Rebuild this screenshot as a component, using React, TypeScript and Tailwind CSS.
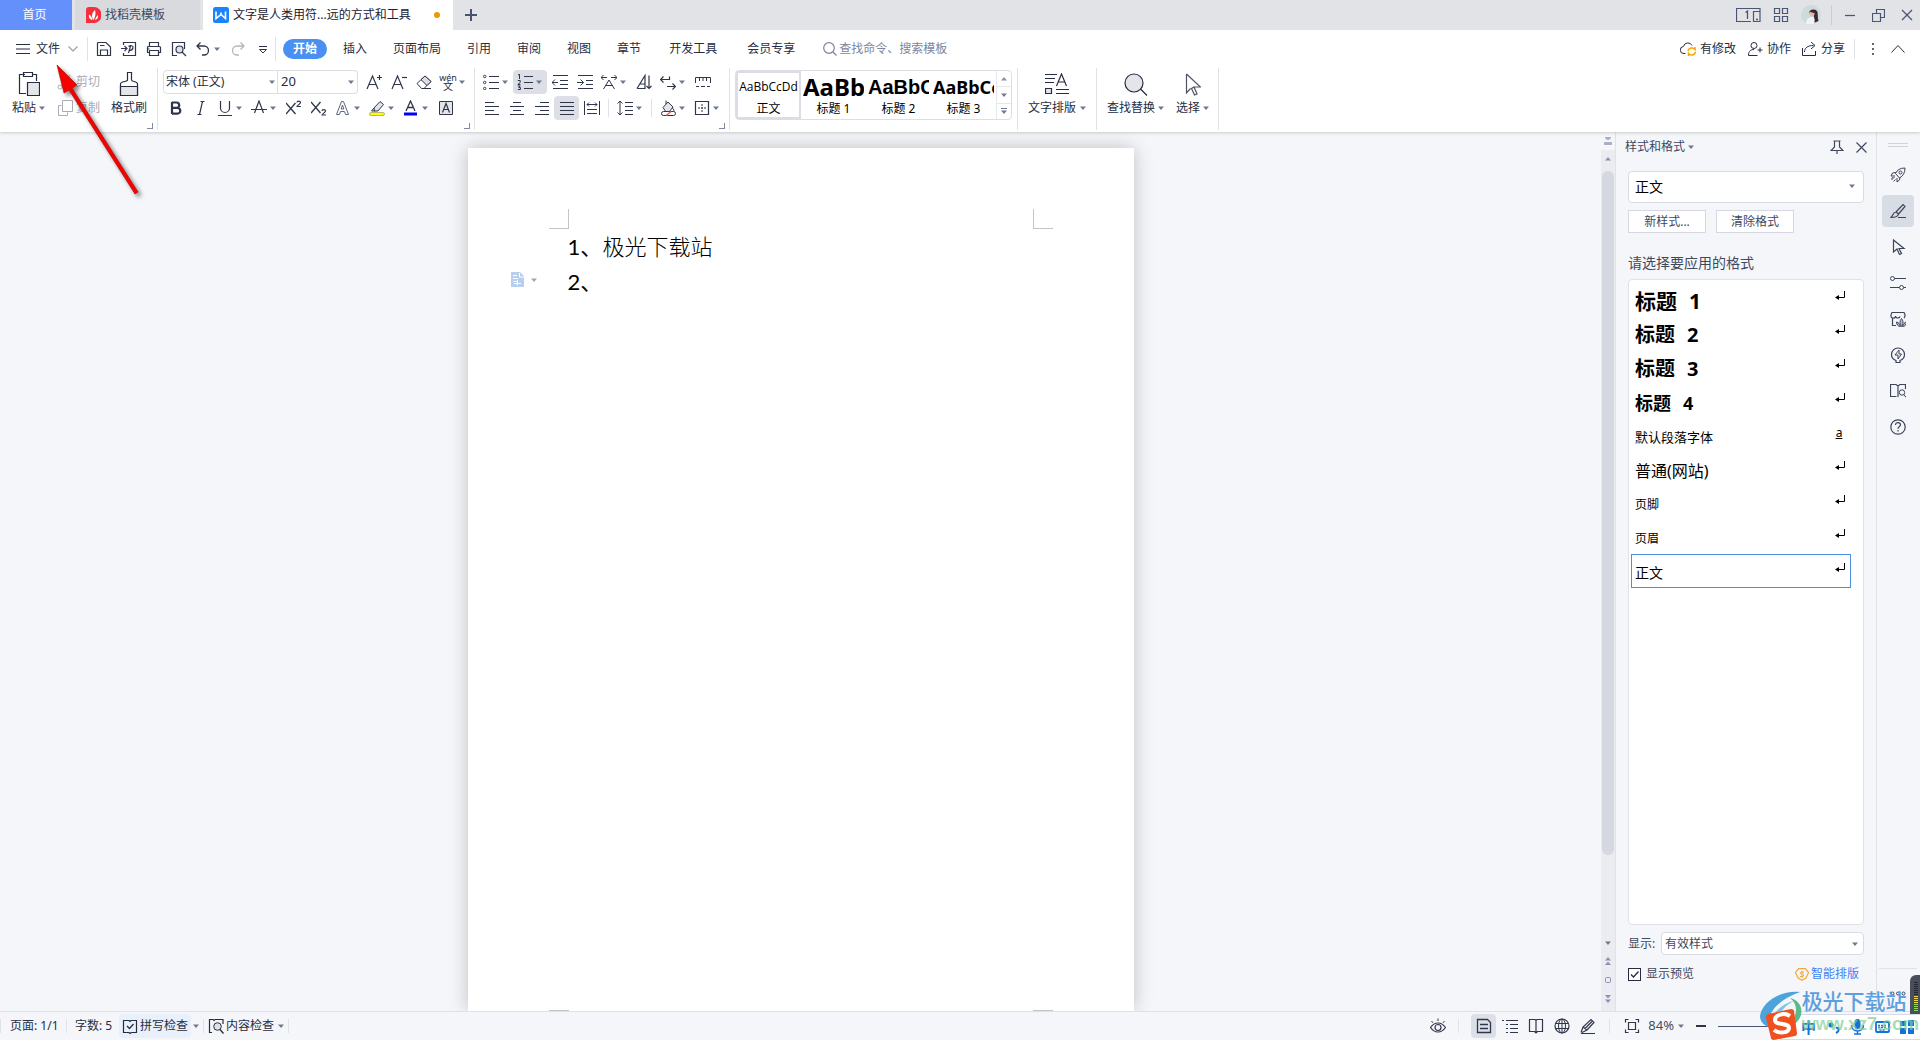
import type { ReactNode } from "react";
import clsx from "clsx";

const Svg = ({
  w = 16,
  h = 16,
  className,
  children,
}: {
  w?: number;
  h?: number;
  className?: string;
  children: ReactNode;
}) => (
  <svg
    width={w}
    height={h}
    viewBox={`0 0 ${w} ${h}`}
    fill="none"
    stroke="currentColor"
    className={clsx("shrink-0", className)}
    aria-hidden="true"
  >
    {children}
  </svg>
);

const Caret = ({ className }: { className?: string }) => (
  <Svg w={6} h={4} className={clsx("text-[#6f7891]", className)}>
    <path d="M0 .5h6L3 4z" fill="currentColor" stroke="none" />
  </Svg>
);

const CaretUp = () => (
  <Svg w={6} h={4} className="text-[#8a93ad]">
    <path d="M0 3.5h6L3 0z" fill="currentColor" stroke="none" />
  </Svg>
);

const Divider = ({ className }: { className?: string }) => (
  <span className={clsx("w-px shrink-0 bg-[#e0e2e7]", className)} />
);

/* 16px 工具图标 */
const icons: Record<string, ReactNode> = {
  save: (
    <>
      <path d="M1.5 14.5v-12a1 1 0 0 1 1-1h7.500l4.500 4.500v8.500z" strokeWidth="1.200" />
      <path d="M4.500 14.500v-5.500h7v5.500M4 4.500h4.500" strokeWidth="1.200" />
    </>
  ),
  export: (
    <>
      <path d="M2.500 4V1.500h12v13h-12V12" strokeWidth="1.200" />
      <path d="M0 7.500h5.500M3.500 5l2.500 2.500L3.500 10M7.500 12l2-7M7.500 5.500c2-1.500 5-1 4.500 1.500-.5 2-3 2.500-4 2.500" strokeWidth="1.200" />
    </>
  ),
  print: (
    <>
      <path d="M3.500 5.500v-4h9v4M3.500 11.500h-2v-5a1 1 0 0 1 1-1h11a1 1 0 0 1 1 1v5h-2M1.500 8h2" strokeWidth="1.200" />
      <path d="M3.500 9.500h9v5h-9z" strokeWidth="1.200" />
    </>
  ),
  preview: (
    <>
      <path d="M6 14.500H1.500v-13h12V8" strokeWidth="1.200" />
      <circle cx="8.500" cy="8.500" r="3.500" fill="#dfe1e6" strokeWidth="1.200" />
      <path d="m11 11 4 4" strokeWidth="1.300" />
    </>
  ),
  undo: <path d="M5.500 1.500 2 5l3.500 3.500M2 5h7a4.500 4.500 0 0 1 0 9H7" strokeWidth="1.300" />,
  redo: <path d="M10.500 1.500 14 5l-3.500 3.500M14 5H7a4.500 4.500 0 0 0 0 9h2" strokeWidth="1.300" />,
  overflow: (
    <>
      <path d="M4 5.500h8" />
      <path d="M4.500 8.500h7L8 12z" />
    </>
  ),
  cut: (
    <>
      <circle cx="3" cy="13" r="2" />
      <circle cx="13" cy="13" r="2" />
      <path d="M3 1l8.500 10.500M13 1 4.500 11.500" />
    </>
  ),
  copy: (
    <>
      <path d="M4.500 5.500h-3v10h9v-3" />
      <path d="M5.500.500h10v11h-10z" />
    </>
  ),
  fontUp: (
    <>
      <path d="M1 15 6.500 2 12 15M3 10.500h7" strokeWidth="1.200" />
      <path d="M11 3.500h5M13.500 1v5" strokeWidth="1.200" />
    </>
  ),
  fontDown: (
    <>
      <path d="M1 15 6.500 2 12 15M3 10.500h7" strokeWidth="1.200" />
      <path d="M11 3.500h5" strokeWidth="1.200" />
    </>
  ),
  eraser: (
    <>
      <path d="M1 9.500 9 2l6 5.500-7 7H5.500z" />
      <path d="m5 5.700 6 5.800L15 7.500 9 2z" fill="#dcdee4" />
      <path d="M7 14.500h8" />
    </>
  ),
  bold: <path d="M4 2v12M4 2.500h4.500a2.700 2.700 0 0 1 0 5.400H4M4 8h5.500a2.800 2.800 0 0 1 0 5.600H4" strokeWidth="2.200" />,
  italic: <path d="M7.500 1.500h4M4.500 14.500h4M9.500 1.500l-3 13" strokeWidth="1.200" />,
  underline: <path d="M3.500 1v7a4.500 4.500 0 0 0 9 0V1M1 15.500h14" strokeWidth="1.200" />,
  strike: <path d="M3.500 13 8 1l4.500 12M0 9.500h16" strokeWidth="1.200" />,
  sup: (
    <>
      <path d="M0 3l9.500 11M9.500 3 0 14" strokeWidth="1.300" />
      <path d="M11 2.500C11 .7 14.500.5 14.500 2.500c0 1.500-3.500 3-3.500 4h4" strokeWidth="1.200" />
    </>
  ),
  sub: (
    <>
      <path d="M0 2l9.500 11M9.500 2 0 13" strokeWidth="1.300" />
      <path d="M11 11c0-1.800 3.500-2 3.500 0 0 1.500-3.500 3-3.500 4h4" strokeWidth="1.200" />
    </>
  ),
  outline: (
    <>
      <path d="M1.500 14.500 6.500 1.500h2l5 13h-3l-1-3h-4l-1 3z" stroke="#5f6880" />
      <path d="M6.200 9 7.500 5l1.300 4z" stroke="#5f6880" />
    </>
  ),
  highlight: (
    <>
      <path d="M5 8 11 1.500l3.500 3L9 11H5.500zM5 8 2.500 11H6" fill="#e2e4e9" />
      <rect x="0.500" y="12.500" width="15" height="3" rx="1.500" fill="#ff0" stroke="#8b8b5a" strokeWidth=".6" />
    </>
  ),
  fontColor: (
    <>
      <path d="M3 11 7.500 1 12 11M4.500 7.500h6" strokeWidth="1.300" />
      <path d="M1 14h13" stroke="#00f" strokeWidth="3" />
    </>
  ),
  boxed: (
    <>
      <path d="M1.500 1.500h13v13h-13z" fill="#e4e5e9" />
      <path d="m4.500 12.500 3.500-9 3.500 9M6 9.500h4" strokeWidth="1.200" />
    </>
  ),
  bullets: (
    <>
      <path d="M6 2.500h10M6 8.500h10M6 14.500h10" />
      <circle cx="1.700" cy="2.500" r="1.200" />
      <circle cx="1.700" cy="8.500" r="1.200" />
      <circle cx="1.700" cy="14.500" r="1.200" />
    </>
  ),
  numbers: (
    <>
      <path d="M7 2.500h9M7 8.500h9M7 14.500h9" />
      <path d="M1 1l1.500-.8V5M.8 6.500h2.400v2L.8 10.500h2.700M.8 12h2.400l-1.400 1.500h1.600v2H.8" />
    </>
  ),
  outdent: <path d="M1 1.500h15M8 6.500h8M8 10.500h8M1 14.500h15M0 8.500h6M3 5.500l-3 3 3 3" />,
  indent: <path d="M1 1.500h15M9 6.500h7M9 10.500h7M1 14.500h15M0 8.500h6.500M3.500 5.500l3 3-3 3" />,
  textWidth: <path d="M2.500 15 8 6l5.500 9M4.500 11.500h7M0 3.500h6M2.500 1l-2.500 2.500L2.500 6M10 3.500h6M13.500 1l2.500 2.500L13.500 6" />,
  sort: <path d="M1 14.500h8v-13L1 14.500M4 10h5M13 1.500v13M10.500 12l2.500 2.500 2.500-2.500" strokeWidth="1.200" />,
  wrap: <path d="M15.500 12.500H7M12.500 9.500l3 3-3 3M.5 5.500h9v-3M3.500 2.500l-3 3 3 3" strokeWidth="1.200" />,
  ruler: (
    <>
      <path d="M.5 9V3.500h15V9" />
      <path d="M4.500 4v3M8 4v3M11.500 4v3M1 12.500h3M6 12.500h4M12 12.500h3" />
    </>
  ),
  alignLeft: <path d="M1 2.500h9M1 6.500h14M1 10.500h9M1 14.500h14" />,
  alignCenter: <path d="M4 2.500h8M1 6.500h14M4 10.500h8M1 14.500h14" />,
  alignRight: <path d="M6 2.500h9M1 6.500h14M6 10.500h9M1 14.500h14" />,
  justify: <path d="M1 2.500h14M1 6.500h14M1 10.500h14M1 14.500h14" strokeWidth="1.200" />,
  distribute: <path d="M.5 1v14M15.500 1v14M3 9.500h10M3 13.500h10M3 4.500h10M5 2.500l-2 2 2 2M11 2.500l2 2-2 2" />,
  spacing: <path d="M3 1v14M.5 3.500 3 1l2.500 2.500M.5 12.500 3 15l2.500-2.500M8 2.500h8M8 6.500h8M8 10.500h8M8 14.500h8" />,
  fill: (
    <>
      <path d="M3 7.500 8 2l5 5-4 5H6z" fill="#e4e5ea" />
      <path d="M6 4V.5" />
      <path d="M12.500 8c2 2.500 2 3.500.5 3.500" />
      <rect x="1.500" y="11.500" width="14" height="4" rx="2" fill="#fff" />
      <path d="m6 15.500 5-4" stroke="#e66" strokeWidth="1.500" />
    </>
  ),
  border: (
    <>
      <path d="M1.500 1.500h13v13h-13z" strokeWidth="1.200" />
      <path d="M8 4v8M4 8h8" strokeDasharray="2 1" />
    </>
  ),
  cloud: (
    <>
      <path d="M5.500 12.500H4a3.500 3.500 0 0 1-.5-7A4.500 4.500 0 0 1 12 4.500" />
      <path d="M8 10a4 4 0 0 1 7-1.500V6M15.500 11a4 4 0 0 1-7 1.500V15" stroke="#f5a300" strokeWidth="1.500" />
    </>
  ),
  collab: (
    <>
      <circle cx="7" cy="4.500" r="3" />
      <path d="M1.500 14.500c0-5 3-6 5.500-6M1.500 14.500h9M13 6.500v5M10.500 9H15.500" />
    </>
  ),
  share: <path d="M1.500 7v7.500h13V10M3.500 11c0-4 3-6.500 9-6.500M10 1l4 3.500L10 8" />,
  eye: (
    <>
      <path d="M.5 9.500c4-6 11-6 15 0-4 6-11 6-15 0z" strokeWidth="1.200" />
      <circle cx="8" cy="9.500" r="3" strokeWidth="1.200" />
      <path d="M8 .5v2.500M1.500 3 3 4.800M14.500 3 13 4.800" />
    </>
  ),
  pageView: <path d="M1.500 1.500h10l3 3v10h-13zM4 6.500h8M4 10.500h8" strokeWidth="1.300" />,
  outlineView: <path d="M0 2.500h2M4 2.500h12M4 6.500h2M8 6.500h8M4 10.500h2M8 10.500h8M4 14.500h2M8 14.500h8" strokeWidth="1.200" />,
  book: <path d="M1.500 1.500H7l1 1 1-1h5.500v12H9.500L8 15l-1.500-1.500h-5zM8 2.500V14" strokeWidth="1.200" />,
  globe: (
    <>
      <circle cx="8" cy="8" r="7" strokeWidth="1.200" />
      <ellipse cx="8" cy="8" rx="3.500" ry="7" />
      <path d="M1.500 5.500h13M1.500 10.500h13M8 1v14" />
    </>
  ),
  pen: <path d="M1 14.500 3 9 11 1.500l3 3L7 12l-5 2.500M3 9l4 3M5 10.500l7-7M1 15.500h14" strokeWidth="1.200" />,
  fit: <path d="M1.500 4.500v-3h3M11.500 1.500h3v3M14.500 11.500v3h-3M4.500 14.500h-3v-3M4.500 4.500h7v7h-7z" strokeWidth="1.200" />,
  spell: (
    <>
      <path d="M1.500 2.500H7l1 1 1-1h5.500v12H9.500L8 15.500l-1-1H1.500z" strokeWidth="1.200" />
      <path d="m5 8 2.500 2.500 4-4.500" strokeWidth="1.300" />
    </>
  ),
  content: (
    <>
      <path d="M4 14.500H1.500v-13H5l1 1 1-1h8V6" strokeWidth="1.200" />
      <circle cx="9.500" cy="8.500" r="3.800" fill="#dfe1e6" />
      <path d="m12 11.500 3.500 4" strokeWidth="1.300" />
    </>
  ),
  rocket: (
    <>
      <path d="M15 1c-5 0-8 2-9.500 5.500L9.500 11C13 9 15 6 15 1zM6 5.500 2.500 6 1 9h4M10 10.500 9.500 13 7 15v-4" />
      <circle cx="10.500" cy="5.500" r="1.500" />
      <path d="M4.500 10 1.500 13M5.500 12.500 3.500 14.500M3 10.500l-1.500 1" />
    </>
  ),
  brushPen: <path d="M6 9 13 1.500l2 2L8.500 11M6 9l2.500 2c-.5 3-3.500 3.500-7.500 3.500C3 13 2.500 9.500 6 9zM8 14.500h8" strokeWidth="1.200" />,
  cursor: <path d="M3.500 1v12L7 10l2.500 5.500 2-1L9 9.500h5z" strokeWidth="1.200" />,
  sliders: (
    <>
      <circle cx="2.500" cy="3.500" r="2" />
      <circle cx="11.500" cy="12.500" r="2" />
      <path d="M4.500 3.500H16M0 12.500h9.500M13.500 12.500H16" strokeWidth="1.200" />
    </>
  ),
  shop: (
    <>
      <path d="M6 14.500H2.500V7M2.500 7C.5 6.500.5 4 2 1.500h12c1.500 2.500 1.500 4 0 5.500M2.500 7c2 .5 3-.5 3-2M5.500 5.500c.5 2 4 2 4.500 0" strokeWidth="1.200" />
      <path d="M11.500 15.500c-2-3-2-5.500 0-8 2 2.500 2 5 0 8zM10.500 15.500c-3 0-4-2.500-4-4.500 2 .5 3.500 2 4 4.500zM12.500 15.500c3 0 4-2.500 4-4.500-2 .5-3.500 2-4 4.500z" fill="currentColor" fillOpacity=".35" />
    </>
  ),
  bulb: (
    <>
      <path d="M6 13.500C3 12.500 1.500 10 1.500 7.500a6.500 6.500 0 0 1 13 0c0 2.500-1.500 5-4.500 6v2H6z" strokeWidth="1.200" />
      <path d="M9 3 5 8h3v4l3.500-5H9z" />
    </>
  ),
  bookSearch: (
    <>
      <path d="M6.500 13.500H.5v-12H6L8 3l2-1.500h5.500V6M8 3v11" strokeWidth="1.200" />
      <circle cx="12" cy="9.500" r="2.700" />
      <path d="m14 11.500 2 3" />
    </>
  ),
  help: (
    <>
      <circle cx="8" cy="8" r="7.200" strokeWidth="1.200" />
      <path d="M5.500 6c0-3.500 5-3 5-.2 0 1.700-2.500 1.700-2.500 4M8 11v1.500" strokeWidth="1.200" />
    </>
  ),
};

const Tool = ({
  icon,
  label,
  caret,
  active,
  disabled,
}: {
  icon: string;
  label: string;
  caret?: boolean;
  active?: boolean;
  disabled?: boolean;
}) => (
  <button
    aria-label={label}
    disabled={disabled}
    className={clsx(
      "flex h-6 shrink-0 items-center rounded-sm",
      caret ? "w-[34px] gap-[3px] pl-1" : "w-[25px] justify-center",
      active && "bg-[#dce0e6]",
      disabled ? "text-[#b4b7bf]" : "text-[#2f364b]",
    )}
  >
    <Svg>{icons[icon]}</Svg>
    {caret && <Caret />}
  </button>
);

const Launcher = () => (
  <button aria-label="更多设置" className="mt-[3px] mr-1 size-[6px] self-end border-r border-b border-[#8089a0]" />
);

const menuTabs = ["插入", "页面布局", "引用", "审阅", "视图", "章节"];
const extraTabs = ["开发工具", "会员专享"];

const previews = [
  { name: "标题 1", sample: "AaBb", font: "text-2xl font-bold font-['Noto_Sans','Noto_Sans_CJK_SC',sans-serif]" },
  { name: "标题 2", sample: "AaBbC", font: "text-xl font-bold font-['Liberation_Sans','Noto_Sans_CJK_SC',sans-serif]" },
  { name: "标题 3", sample: "AaBbCc", font: "text-lg font-bold font-['Noto_Sans','Noto_Sans_CJK_SC',sans-serif]" },
];

const styles = [
  { name: "标题", level: 1, cls: "text-[21px] font-bold" },
  { name: "标题", level: 2, cls: "text-[20px] font-bold" },
  { name: "标题", level: 3, cls: "text-[20px] font-bold" },
  { name: "标题", level: 4, cls: "text-[18px] font-bold" },
  { name: "默认段落字体", cls: "text-[13px]", char: true },
  { name: "普通(网站)", cls: "text-base" },
  { name: "页脚", cls: "text-xs" },
  { name: "页眉", cls: "text-xs" },
  { name: "正文", cls: "text-sm", selected: true },
];

const sideTools = [
  { icon: "rocket", label: "推荐" },
  { icon: "brushPen", label: "样式和格式", active: true },
  { icon: "cursor", label: "选择" },
  { icon: "sliders", label: "属性" },
  { icon: "shop", label: "稻壳资源" },
  { icon: "bulb", label: "灵感" },
  { icon: "bookSearch", label: "查阅" },
  { icon: "help", label: "帮助" },
];

const TitleBar = () => (
  <div className="flex h-[30px] shrink-0 items-center bg-[#e2e3e7]">
    <button className="mr-[3px] h-full w-[72px] bg-[#6490fb] pr-[3px] text-white">首页</button>
    <button className="mr-[3px] flex h-full w-[125px] items-center gap-1 bg-[#d9dade] pl-[11px] text-[#41485c]">
      <Svg w={15} h={16}>
        <path d="M3 0h5a7.500 8 0 0 1 0 16H0V3a3 3 0 0 1 3-3z" fill="#f5303c" stroke="none" />
        <path d="M7.500 13C5 10 5.500 6 9 3c1 3 .5 7-1.500 10zM6.500 13C3.500 12.500 2.500 10 3 7.500c2 1 3 3 3.500 5.500zM9 13c2.500-.5 3.500-2.500 3-5-1.500 1-2.500 3-3 5z" fill="#fff" stroke="none" />
      </Svg>
      找稻壳模板
    </button>
    <button className="flex h-full w-[250px] items-center gap-1 bg-white pr-[13px] pl-[10px] text-[#1b2133]">
      <Svg>
        <rect width="16" height="16" rx="2.500" fill="#1b83fb" stroke="none" />
        <path d="M3 4.500v7l5-4 4.500 4v-7M8 7.500v-2" stroke="#fff" strokeWidth="1.600" />
      </Svg>
      文字是人类用符...远的方式和工具
      <span className="ml-auto size-[6px] rounded-full bg-[#e89b00]" />
    </button>
    <button aria-label="新建标签" className="flex w-9 justify-center text-[#48536e]">
      <Svg w={12} h={12}>
        <path d="M6 0v12M0 6h12" strokeWidth="2" />
      </Svg>
    </button>
    <div className="ml-auto flex items-center pr-[7px] text-[#4a5674]">
      <button aria-label="窗口排列" className="mr-3">
        <Svg w={25} h={15}>
          <path d="M15 13.500H.500v-13H24V4M17.500 3.500h6.500v10h-6.500z" strokeWidth="1.200" />
          <path d="M9.500 4.500 11.500 3v8M20 11.500h2" strokeWidth="1.300" />
        </Svg>
      </button>
      <button aria-label="应用" className="mr-3">
        <Svg>
          <path d="M1.500 1.500h5v5h-5zM9.500 1.500h5v5h-5zM1.500 9.500h5v5h-5zM9.500 9.500h5v5h-5z" strokeWidth="1.200" />
        </Svg>
      </button>
      <button aria-label="账号" className="mr-[10px]">
        <Svg w={20} h={20}>
          <circle cx="10" cy="10" r="10" fill="#cfdadd" stroke="none" />
          <path d="M8 8c1-4 7-5 8.500-1 .5 3 0 6 1 9l-5 2c1-3 1-5 0-8z" fill="#33292e" stroke="none" />
          <path d="M5 19c0-5 3-7 6-7s3 4 2 7.500z" fill="#eef4f5" stroke="none" />
          <ellipse cx="11" cy="8.500" rx="2.500" ry="3" fill="#e2b9a8" stroke="none" />
          <path d="M8.500 6.500c2-3 5-2 6 1l-2 .5z" fill="#33292e" stroke="none" />
        </Svg>
      </button>
      <Divider className="mr-3 h-5 !bg-[#c9ccd4]" />
      <button aria-label="最小化" className="mr-4">
        <Svg w={12} h={12}>
          <path d="M1 6.500h10" strokeWidth="1.300" />
        </Svg>
      </button>
      <button aria-label="还原" className="mr-4">
        <Svg w={13} h={13}>
          <path d="M.500 4.500h8v8h-8zM4.500 4V.500h8v8H9" strokeWidth="1.200" />
        </Svg>
      </button>
      <button aria-label="关闭">
        <Svg w={12} h={12}>
          <path d="m1 1 10 10M11 1 1 11" strokeWidth="1.300" />
        </Svg>
      </button>
    </div>
  </div>
);

const MenuBar = () => (
  <div className="flex h-[38px] shrink-0 items-center text-[#262d42]">
    <button className="flex items-center pl-4">
      <Svg w={14} h={10} className="mr-[6px]">
        <path d="M0 .500h14M0 5h14M0 9.500h14" />
      </Svg>
      文件
      <Svg w={10} h={6} className="mr-[9px] ml-2 text-[#9a9fab]">
        <path d="m.5.500 4.500 4.500L9.500.500" strokeWidth="1.200" />
      </Svg>
    </button>
    <Divider className="mr-[3px] h-6" />
    <Tool icon="save" label="保存" />
    <Tool icon="export" label="输出为PDF" />
    <Tool icon="print" label="打印" />
    <Tool icon="preview" label="打印预览" />
    <Tool icon="undo" label="撤销" caret />
    <Tool icon="redo" label="恢复" disabled />
    <Tool icon="overflow" label="自定义快速访问工具栏" />
    <Divider className="mr-[7px] h-6" />
    <nav className="flex items-center">
      <button className="mr-[3px] h-5 rounded-full bg-[#4a8ff2] px-[10px] font-bold text-white">开始</button>
      {menuTabs.map((tab) => (
        <button key={tab} className="px-[13px]">
          {tab}
        </button>
      ))}
      {extraTabs.map((tab) => (
        <button key={tab} className="px-[15px]">
          {tab}
        </button>
      ))}
    </nav>
    <label className="flex items-center gap-[2px] pl-[13px] text-[#7b859f]">
      <Svg w={14} h={14}>
        <circle cx="6" cy="6" r="5.300" strokeWidth="1.200" />
        <path d="m10 10 3.500 3.500" strokeWidth="1.200" />
      </Svg>
      <input aria-label="搜索" placeholder="查找命令、搜索模板" className="w-32 outline-none placeholder:text-[#7b859f]" />
    </label>
    <div className="ml-auto flex items-center pr-[15px]">
      <button className="mr-[11px] flex items-center gap-1">
        <Svg>{icons.cloud}</Svg>有修改
      </button>
      <button className="mr-[10px] flex items-center gap-1">
        <Svg>{icons.collab}</Svg>协作
      </button>
      <button className="mr-[9px] flex items-center gap-1">
        <Svg>{icons.share}</Svg>分享
      </button>
      <Divider className="h-5" />
      <button aria-label="更多" className="mx-4">
        <Svg w={4} h={12}>
          <path d="M1 0h2v2H1zM1 5h2v2H1zM1 10h2v2H1z" fill="#5d6477" stroke="none" />
        </Svg>
      </button>
      <button aria-label="收起功能区">
        <Svg w={14} h={8}>
          <path d="m.5 7.500 6.500-7 6.500 7" />
        </Svg>
      </button>
    </div>
  </div>
);

const Ribbon = () => (
  <div className="flex h-16 shrink-0 items-start text-[#262d42]">
    <div className="flex w-[157px] flex-col">
      <div className="flex h-[52px] items-start pt-1">
        <button className="flex w-[57px] flex-col items-center gap-1">
          <Svg w={22} h={24}>
            <path d="M7 2.500H1.500v19H8M15 2.500h3.500V9M5.500.500h9v4h-9z" strokeWidth="1.200" />
            <path d="M9.500 10.500h12v13h-12z" fill="#e4e5e9" strokeWidth="1.200" />
          </Svg>
          <span className="flex items-center gap-[3px] leading-4">
            粘贴
            <Caret />
          </span>
        </button>
        <div className="flex w-[51px] flex-col gap-[10px] pt-[2px] text-[#a9acb4]">
          <button className="flex items-center gap-[3px] leading-4">
            <Svg>{icons.cut}</Svg>剪切
          </button>
          <button className="flex items-center gap-[3px] leading-4">
            <Svg>{icons.copy}</Svg>复制
          </button>
        </div>
        <button className="flex w-[42px] flex-col items-center gap-1">
          <Svg w={20} h={24}>
            <path d="M8.500 8V.500h4V8c0 2 6 1 6 4v11.500h-17V12c0-3 7-2 7-4z" strokeWidth="1.200" />
            <path d="M1.500 14.500h17v9h-17z" fill="#e4e5e9" strokeWidth="1.200" />
          </Svg>
          <span className="leading-4 whitespace-nowrap">格式刷</span>
        </button>
      </div>
      <Launcher />
    </div>
    <Divider className="mr-[5px] h-[62px]" />

    <div className="flex w-[311px] flex-col">
      <div className="flex h-7 items-center">
        <div className="relative h-6 w-[115px]">
          <select aria-label="字体" className="size-full appearance-none rounded-l-sm border border-[#dcdee4] pl-[2px]">
            <option>宋体 (正文)</option>
          </select>
          <Caret className="absolute top-[10px] right-[3px]" />
        </div>
        <div className="relative mr-[3px] h-6 w-[80px]">
          <select aria-label="字号" className="size-full appearance-none rounded-r-sm border border-l-0 border-[#dcdee4] pl-[3px] text-[13px]">
            <option>20</option>
          </select>
          <Caret className="absolute top-[10px] right-1" />
        </div>
        <Tool icon="fontUp" label="增大字号" />
        <Tool icon="fontDown" label="减小字号" />
        <Tool icon="eraser" label="清除格式" />
        <button aria-label="拼音指南" className="flex w-[34px] items-center gap-[3px] pl-1">
          <span className="flex w-4 flex-col items-center">
            <span className="text-[9px] leading-[8px]">wén</span>
            <span className="text-[10px] leading-[9px]">文</span>
          </span>
          <Caret />
        </button>
      </div>
      <div className="flex h-6 items-center">
        <Tool icon="bold" label="加粗" />
        <Tool icon="italic" label="倾斜" />
        <Tool icon="underline" label="下划线" caret />
        <Tool icon="strike" label="删除线" caret />
        <Tool icon="sup" label="上标" />
        <Tool icon="sub" label="下标" />
        <Tool icon="outline" label="文字效果" caret />
        <Tool icon="highlight" label="突出显示" caret />
        <Tool icon="fontColor" label="字体颜色" caret />
        <Tool icon="boxed" label="字符底纹" />
      </div>
      <Launcher />
    </div>
    <Divider className="mr-1 h-[62px]" />

    <div className="flex w-[250px] flex-col">
      <div className="flex h-7 items-center">
        <Tool icon="bullets" label="项目符号" caret />
        <Tool icon="numbers" label="编号" caret active />
        <Tool icon="outdent" label="减少缩进量" />
        <Tool icon="indent" label="增加缩进量" />
        <Tool icon="textWidth" label="中文版式" caret />
        <Tool icon="sort" label="排序" />
        <Tool icon="wrap" label="显示/隐藏编辑标记" caret />
        <Tool icon="ruler" label="制表位" />
      </div>
      <div className="flex h-6 items-center">
        <Tool icon="alignLeft" label="左对齐" />
        <Tool icon="alignCenter" label="居中对齐" />
        <Tool icon="alignRight" label="右对齐" />
        <Tool icon="justify" label="两端对齐" active />
        <Tool icon="distribute" label="分散对齐" />
        <Divider className="mx-1 h-[18px]" />
        <Tool icon="spacing" label="行距" caret />
        <Divider className="mx-1 h-[18px]" />
        <Tool icon="fill" label="底纹颜色" caret />
        <Tool icon="border" label="边框" caret />
      </div>
      <Launcher />
    </div>
    <Divider className="mr-[5px] h-[62px]" />

    <div className="mt-[2px] flex h-[50px] w-[277px] rounded-sm border border-[#dcdee4] text-black">
      <button className="flex w-[65px] shrink-0 flex-col items-center border-2 border-[#dadde4]">
        <span className="h-7 font-['Open_Sans','Noto_Sans_CJK_SC',sans-serif] leading-7">AaBbCcDd</span>
        <span className="leading-4">正文</span>
      </button>
      {previews.map((p) => (
        <button key={p.name} className="flex w-[65px] shrink-0 flex-col items-center px-[2px] pt-[2px]">
          <span className={clsx("h-7 w-full overflow-hidden text-left leading-7", p.font)}>{p.sample}</span>
          <span className="leading-4">{p.name}</span>
        </button>
      ))}
      <div className="ml-auto flex w-4 flex-col divide-y divide-[#e6e7eb] border-l border-[#e6e7eb]">
        <button aria-label="上一行" className="flex flex-1 items-center justify-center">
          <CaretUp />
        </button>
        <button aria-label="下一行" className="flex flex-1 items-center justify-center">
          <Caret />
        </button>
        <button aria-label="展开样式" className="flex flex-1 flex-col items-center justify-center gap-px">
          <span className="h-px w-[6px] bg-[#6f7891]" />
          <Caret />
        </button>
      </div>
    </div>

    <Divider className="ml-[5px] h-[62px]" />
    <button className="flex w-[78px] flex-col items-center gap-1 pt-[5px]">
      <Svg w={24} h={23}>
        <path d="M0 1.500h12M0 5.500h10M0 9.500h9M11 20.500h13M11 16.500h13M11.500 13 16.500 1l5 12M13.500 9h6" strokeWidth="1.200" />
        <path d="M.500 15.500h6v5h-6z" fill="#e4e5e9" strokeWidth="1.200" />
      </Svg>
      <span className="flex items-center gap-1 leading-4">
        文字排版
        <Caret />
      </span>
    </button>
    <Divider className="h-[62px]" />
    <div className="flex w-[121px] gap-3 pt-[5px] pl-[10px]">
      <button className="flex flex-col items-center gap-1">
        <Svg w={24} h={23}>
          <circle cx="10" cy="10" r="9" fill="#e4e5e9" strokeWidth="1.200" />
          <path d="m16.500 16 6.500 6.500" strokeWidth="1.300" />
        </Svg>
        <span className="flex items-center gap-[3px] leading-4">
          查找替换
          <Caret />
        </span>
      </button>
      <button className="flex flex-col items-center gap-1">
        <Svg w={16} h={23}>
          <path d="M1.500 1v19l4-4.500M1.500 1l14 13H9l3 7-2.500 1-3-6.500L9 14" stroke="#4c5368" strokeWidth="1.200" />
        </Svg>
        <span className="flex items-center gap-[3px] leading-4">
          选择
          <Caret />
        </span>
      </button>
    </div>
    <Divider className="h-[62px]" />
  </div>
);

const Document = () => (
  <main className="flex flex-1 justify-center overflow-hidden">
    <article className="mt-4 flex w-[666px] flex-col bg-white pt-[61px] shadow-[0_0_18px_rgba(0,0,0,0.22)]">
      <div className="flex justify-between px-[81px]">
        <span className="h-5 w-5 border-r border-b border-[#c4c4c4]" />
        <span className="h-5 w-5 border-b border-l border-[#c4c4c4]" />
      </div>
      <div className="pl-[43px] font-['Lato','Noto_Sans_CJK_SC',sans-serif] text-[22px] leading-[35px] text-black">
        <p className="flex pl-[57px]">
          <span className="w-[35px]">1、</span>
          <span className="font-light">极光下载站</span>
        </p>
        <div className="flex items-center">
          <button aria-label="粘贴选项" className="mb-1 flex w-[57px] items-center gap-[7px]">
            <Svg w={13} h={15}>
              <path d="M0 0h9l4 4v11H0z" fill="#b9cdec" stroke="none" />
              <path d="M2 3.500h4M2 6.500h5M2 9.500h4M8.500 1v4H13M3 11.500h7M6.500 8v5.500" stroke="#fff" />
            </Svg>
            <Caret className="!text-[#a5a5a5]" />
          </button>
          <p>2、</p>
        </div>
      </div>
      <div className="mt-auto flex justify-between px-[81px]">
        <span className="h-px w-5 bg-[#c4c4c4]" />
        <span className="h-px w-5 bg-[#c4c4c4]" />
      </div>
    </article>
  </main>
);

const ScrollBar = () => (
  <div className="flex w-[15px] flex-col items-center border-r border-[#e0e2e7] text-[#8a93b4]">
    <button aria-label="标尺" className="flex h-[18px] w-full items-center justify-center">
      <Svg w={8} h={8}>
        <path d="M1 0h6v1L5 3H3L1 1zM0 5h8v3H0z" fill="#aab1c6" stroke="none" />
      </Svg>
    </button>
    <div className="flex w-full flex-1 flex-col items-center bg-[#ebecf1] pt-[7px]">
      <CaretUp />
      <span className="mt-[10px] mb-[86px] w-3 flex-1 rounded-full bg-[#d5d7e1]" />
      <Caret />
      <Svg w={8} h={8} className="mt-3">
        <path d="M1 3.500h6L4 0zM1 8h6L4 4.500z" fill="currentColor" stroke="none" />
      </Svg>
      <Svg w={6} h={6} className="mt-3">
        <rect x=".5" y=".5" width="5" height="5" rx="1" />
      </Svg>
      <Svg w={8} h={8} className="mt-3 mb-2">
        <path d="M1 0h6L4 3.500zM1 4.500h6L4 8z" fill="currentColor" stroke="none" />
      </Svg>
    </div>
  </div>
);

const StylePanel = () => (
  <aside className="flex w-[261px] flex-col border-r border-[#e0e2e7] px-3 text-[#40485d]">
    <header className="-mr-[3px] -ml-[3px] flex h-[30px] items-center">
      <button className="flex items-center gap-[3px]">
        样式和格式
        <Caret />
      </button>
      <button aria-label="固定" className="mr-3 ml-auto">
        <Svg w={14} h={14}>
          <path d="M3.500 1h7M4.500 1v6L1 10.500h12L9.500 7V1M7 10.500V14" strokeWidth="1.200" />
        </Svg>
      </button>
      <button aria-label="关闭面板">
        <Svg w={11} h={11}>
          <path d="m.5.500 10 10M10.500.500l-10 10" strokeWidth="1.200" />
        </Svg>
      </button>
    </header>
    <div className="relative mt-[9px] h-8">
      <select aria-label="当前样式" className="size-full appearance-none rounded-sm border border-[#d9dbe2] bg-white pl-[6px] text-sm text-black">
        <option>正文</option>
      </select>
      <Caret className="absolute top-[13px] right-[9px]" />
    </div>
    <div className="mt-[7px] flex gap-[10px]">
      <button className="h-[23px] w-[78px] border border-[#d5d8e0] bg-white">新样式...</button>
      <button className="h-[23px] w-[78px] border border-[#d5d8e0] bg-white">清除格式</button>
    </div>
    <h2 className="mt-5 text-sm">请选择要应用的格式</h2>
    <ul className="mt-[6px] flex-1 rounded-sm border border-[#e0e2e7] bg-white py-[2px] pr-3 pl-[2px] text-black">
      {styles.map((s) => (
        <li key={s.name + (s.level ?? "")}>
          <button
            className={clsx(
              "flex h-[34px] w-full items-center justify-between border pr-[5px] pl-[3px]",
              s.selected ? "border-[#4a8ee6]" : "border-transparent",
            )}
          >
            <span className={clsx("mt-1 flex gap-3 leading-6", s.cls)}>
              {s.name}
              {s.level && <span>{s.level}</span>}
            </span>
            {s.char ? (
              <span className="mb-1 w-3 text-center text-xs leading-3 underline">a</span>
            ) : (
              <Svg w={10} h={9} className="mb-2">
                <path d="M9.500 0v6.500H1" />
                <path d="M4 4v5L0 6.500z" fill="currentColor" stroke="none" />
              </Svg>
            )}
          </button>
        </li>
      ))}
    </ul>
    <label className="mt-[7px] flex items-center gap-[6px]">
      <span className="w-[27px] shrink-0 whitespace-nowrap">显示:</span>
      <span className="relative h-[23px] flex-1">
        <select className="size-full appearance-none rounded-sm border border-[#d9dbe2] bg-white pl-[3px]">
          <option>有效样式</option>
        </select>
        <Caret className="absolute top-[10px] right-[6px]" />
      </span>
    </label>
    <div className="mt-[10px] mb-7 flex h-[18px] items-center justify-between pr-[5px]">
      <label className="flex items-center gap-[5px]">
        <span className="relative flex">
          <input type="checkbox" defaultChecked className="size-[13px] appearance-none border border-[#262d42] bg-white" />
          <Svg w={13} h={13} className="pointer-events-none absolute inset-0 text-[#262d42]">
            <path d="m3 6.500 2.500 2.500 5-5.500" strokeWidth="1.300" />
          </Svg>
        </span>
        显示预览
      </label>
      <button className="flex items-center gap-[2px] text-[#417ff9]">
        <Svg w={14} h={13} className="text-[#f2a93b]">
          <path d="M3.500.700h7l3 4L11 10l-4 2.300L3 10 .500 4.700z" strokeWidth="1.200" />
          <path d="M9 4H6.200c-1 0-1 2 0 2h1.600c1 0 1 2.500 0 2.500H5M7 3v7" />
        </Svg>
        智能排版
      </button>
    </div>
  </aside>
);

const SideBar = () => (
  <aside className="flex w-[43px] flex-col items-center pr-[2px] text-[#3c445a]">
    <span className="mt-[11px] h-1 w-5 border-y border-[#cfd2da]" />
    <div className="mt-3 flex flex-1 flex-col gap-1">
      {sideTools.map((t) => (
        <button
          key={t.icon}
          aria-label={t.label}
          className={clsx("flex size-8 items-center justify-center rounded-sm", t.active && "bg-[#d8dce5]")}
        >
          <Svg>{icons[t.icon]}</Svg>
        </button>
      ))}
    </div>
    <button aria-label="更多工具" className="flex h-[43px] w-[38px] items-start justify-center border-t border-[#e0e2e7] pt-[22px]">
      <Svg w={16} h={5}>
        <circle cx="2.500" cy="2.500" r="1.500" />
        <circle cx="8" cy="2.500" r="1.500" />
        <circle cx="13.500" cy="2.500" r="1.500" />
      </Svg>
    </button>
  </aside>
);

const StatusBar = () => (
  <footer className="flex h-[29px] shrink-0 items-center border-t border-[#dfe1e6] text-[#262d42]">
    <Divider className="mr-[9px] h-[14px]" />
    <button className="w-14 text-left">页面: 1/1</button>
    <Divider className="mr-2 h-[14px]" />
    <button className="w-11 text-left">字数: 5</button>
    <button className="flex h-6 items-center gap-[2px] rounded-sm bg-[#e8f0fc] px-[3px]">
      <Svg>{icons.spell}</Svg>拼写检查
    </button>
    <Caret className="mr-1 ml-[2px]" />
    <Divider className="mr-1 h-[14px]" />
    <button className="flex items-center gap-[2px]">
      <Svg>{icons.content}</Svg>内容检查
      <Caret className="ml-[2px]" />
    </button>
    <Divider className="ml-1 h-[14px]" />
    <div className="ml-auto flex items-center">
      <Tool icon="eye" label="护眼模式" />
      <Divider className="mr-3 ml-2 h-[14px]" />
      <div className="flex gap-px">
        <Tool icon="pageView" label="页面视图" active />
        <Tool icon="outlineView" label="大纲" />
        <Tool icon="book" label="阅读版式" />
        <Tool icon="globe" label="Web版式" />
        <Tool icon="pen" label="写作模式" />
      </div>
      <Divider className="mx-[9px] h-[14px]" />
      <Tool icon="fit" label="最佳显示比例" />
      <button className="ml-1 flex items-center gap-1 text-[13px] text-[#454d63]">
        84%
        <Caret />
      </button>
      <button aria-label="缩小" className="ml-3 flex h-6 items-center">
        <span className="h-[2px] w-[10px] bg-[#2f364b]" />
      </button>
      <input
        type="range"
        aria-label="显示比例"
        defaultValue={84}
        className="mr-[58px] ml-3 h-px w-36 appearance-none bg-[#4a5674] [&::-webkit-slider-thumb]:size-0 [&::-webkit-slider-thumb]:appearance-none"
      />
    </div>
  </footer>
);

const InputMethod = () => (
  <div className="absolute right-0 bottom-0 flex h-[26px] w-[140px] items-center justify-end gap-[10px] border border-r-0 border-[#d4dbe8] bg-white pr-[6px] text-[#1270d8]">
    <span className="text-[15px] leading-5 font-bold">中</span>
    <Svg w={12} h={14} className="ml-[2px]">
      <circle cx="3" cy="5" r="2.500" fill="currentColor" stroke="none" />
      <path d="M8 8c3-1 4 3 0 5" strokeWidth="2" />
    </Svg>
    <Svg w={15} h={16}>
      <rect x="4.500" y="0" width="6" height="10" rx="3" fill="currentColor" stroke="none" />
      <path d="M1.500 6c0 8 12 8 12 0M7.500 12v3M4 15h7" strokeWidth="1.500" />
    </Svg>
    <Svg w={15} h={12}>
      <rect x="1" y="1" width="13" height="10" rx="1" strokeWidth="1.800" />
      <path d="M3 4.500h9M3 6.500h9M4.500 9h6" strokeDasharray="2 1" strokeWidth="1.300" />
    </Svg>
    <Svg w={14} h={14}>
      <path d="M0 1h6v5H0zM8 0h6v6H8zM0 8h6v6H0zM8 8h6v6H8z" fill="currentColor" stroke="none" />
    </Svg>
  </div>
);

const Watermark = () => (
  <div className="pointer-events-none absolute right-px bottom-0 flex items-end">
    <Svg w={42} h={50}>
      <path d="M40 2C20 0 2 12 0 26c0 7 6 11 12 12C4 30 12 12 40 2z" fill="#4da3dc" stroke="none" />
      <path d="M30 8c8 2 13 8 11 17-3 9-11 14-23 14 10-4 18-10 18-19 0-5-2-9-6-12z" fill="#5cb98a" stroke="none" />
      <path d="M14 24c6-8 14-12 20-13-8 4-13 9-15 16z" fill="#7cc4ee" stroke="none" />
      <path d="M8 24 31 19c2 0 3 1 3 2l3 22c0 2-1 3-2 3l-21 4c-2 0-3-1-3-2L6 28c0-2 0-3 2-4z" fill="#f0501e" stroke="none" />
      <path d="M30 26c-6-4-15-1-15 4 0 6 14 2 14 8 0 5-10 6-15 2" stroke="#fff" strokeWidth="4" />
    </Svg>
    <div className="mb-[6px] flex flex-col font-['Liberation_Sans','Noto_Sans_CJK_SC',sans-serif]">
      <span className="text-[21px] leading-6 font-medium text-[#5d9fdd]">极光下载站</span>
      <span className="text-lg leading-5 font-bold text-[#7fce94]/70">www.xz7.com</span>
    </div>
  </div>
);

const VolumeMeter = () => (
  <div className="absolute right-0 bottom-[26px] flex h-[39px] w-[10px] flex-col items-end gap-px rounded-tl-md bg-[#4a4e5c] pt-[7px] pr-[2px]">
    {Array.from({ length: 15 }, (_, i) => (
      <span key={i} className={clsx("h-px w-1", i < 7 ? "bg-[#25272f]" : i < 11 ? "bg-[#e4d84a]" : "bg-[#8edb5a]")} />
    ))}
  </div>
);

const PointerArrow = () => (
  <svg
    width="100"
    height="150"
    viewBox="0 0 100 150"
    className="pointer-events-none absolute top-[60px] left-[50px] z-20 drop-shadow-[3px_3px_2px_rgba(0,0,0,0.5)]"
    aria-hidden="true"
  >
    <path d="M7 5 27 25l-5 3 66 104-3 2-66-104-5 3z" fill="#f80000" stroke="#b00000" strokeWidth=".6" />
  </svg>
);

export default function App() {
  return (
    <div className="relative flex h-screen flex-col overflow-hidden bg-[#f5f6f9] font-['Noto_Sans','Noto_Sans_CJK_SC',sans-serif] text-xs">
      <div className="z-10 flex shrink-0 flex-col bg-white shadow-[0_1px_3px_rgba(0,0,0,0.18)]">
        <TitleBar />
        <MenuBar />
        <Ribbon />
      </div>
      <div className="flex min-h-0 flex-1">
        <Document />
        <ScrollBar />
        <StylePanel />
        <SideBar />
      </div>
      <StatusBar />
      <InputMethod />
      <VolumeMeter />
      <Watermark />
      <PointerArrow />
    </div>
  );
}
